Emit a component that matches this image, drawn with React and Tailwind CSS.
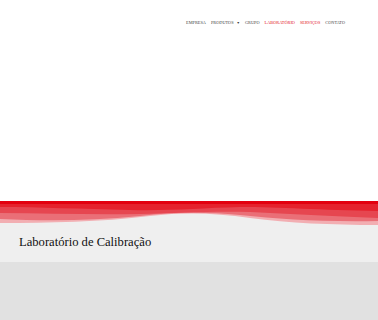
import React from 'react';

const NAV = [
  { label: 'EMPRESA' },
  { label: 'PRODUTOS', caret: true },
  { label: 'GRUPO' },
  { label: 'LABORATÓRIO', active: true },
  { label: 'SERVIÇOS', active: true },
  { label: 'CONTATO' },
];

function Wave() {
  return (
    <svg viewBox="0 0 378 26" preserveAspectRatio="none" className="block w-full h-[26px]">
      <rect x="0" y="0" width="378" height="26" fill="#efefef" />
      {/* back layers, lightest first */}
      <path d="M0 0 H378 V24 C330 24 290 22 250 17 C215 12 185 11 150 15 C100 21 50 22 0 22 Z" fill="#f2aeb2" />
      <path d="M0 0 H378 V20 C320 21 280 18 240 14 C205 11 175 11 140 15 C90 20 45 20 0 18 Z" fill="#ea6f77" />
      <path d="M0 0 H378 V17 C330 15 290 13 250 11 C210 10 180 12 140 13 C90 14 45 12 0 12 Z" fill="#e64650" />
      <path d="M0 0 H378 V10 C320 9 280 6 240 6 C200 7 170 10 130 9 C80 8 40 6 0 6 Z" fill="#e5222d" />
      <rect x="0" y="0" width="378" height="3" fill="#e3000f" />
    </svg>
  );
}

export default function App() {
  return (
    <div className="w-[378px] h-[320px] overflow-hidden bg-[#e1e1e1] flex flex-col" style={{ fontFamily: '"Liberation Serif", serif' }}>
      <header className="h-[201px] bg-white shrink-0">
        <nav className="flex justify-end items-center gap-[5px] pt-[20px] pr-[33px] text-[4.3px] text-[#444]">
          {NAV.map((n) => (
            <span key={n.label} className={`flex items-center gap-[3px] ${n.active ? 'text-[#e3101c]' : ''}`}>
              {n.label}
              {n.caret && <span className="text-[3.5px]">▼</span>}
            </span>
          ))}
        </nav>
      </header>
      <Wave />
      <section className="h-[35px] bg-[#efefef] shrink-0 px-[19px] pt-[7px]">
        <h1 className="text-[12.6px] leading-[16px] text-[#111]">Laboratório de Calibração</h1>
      </section>
      <div className="flex-1 bg-[#e1e1e1]" />
    </div>
  );
}
